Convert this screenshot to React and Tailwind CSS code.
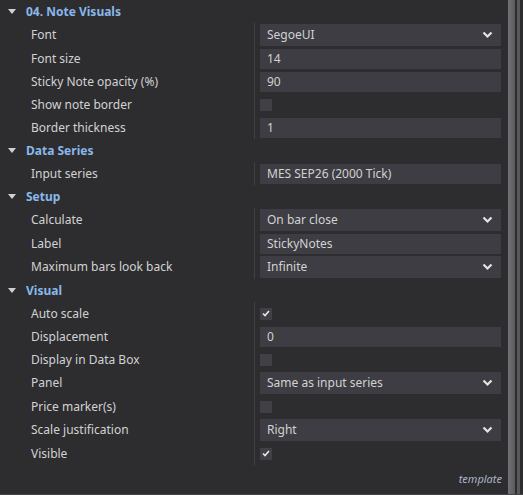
import React from "react";

const sections = [
  {
    title: "04. Note Visuals",
    rows: [
      { label: "Font", type: "select", value: "SegoeUI" },
      { label: "Font size", type: "text", value: "14" },
      { label: "Sticky Note opacity (%)", type: "text", value: "90" },
      { label: "Show note border", type: "check", value: false },
      { label: "Border thickness", type: "text", value: "1" },
    ],
  },
  {
    title: "Data Series",
    rows: [{ label: "Input series", type: "text", value: "MES SEP26 (2000 Tick)" }],
  },
  {
    title: "Setup",
    rows: [
      { label: "Calculate", type: "select", value: "On bar close" },
      { label: "Label", type: "text", value: "StickyNotes" },
      { label: "Maximum bars look back", type: "select", value: "Infinite" },
    ],
  },
  {
    title: "Visual",
    rows: [
      { label: "Auto scale", type: "check", value: true },
      { label: "Displacement", type: "text", value: "0" },
      { label: "Display in Data Box", type: "check", value: false },
      { label: "Panel", type: "select", value: "Same as input series" },
      { label: "Price marker(s)", type: "check", value: false },
      { label: "Scale justification", type: "select", value: "Right" },
      { label: "Visible", type: "check", value: true },
    ],
  },
];

const Chevron = () => (
  <svg width="11" height="8" viewBox="0 0 11 8" className="shrink-0">
    <polyline points="1.5,1.5 5.5,5.5 9.5,1.5" fill="none" stroke="#e4e4e4" strokeWidth="2.2" />
  </svg>
);

const Value = ({ row }) => {
  if (row.type === "check") {
    return (
      <div className="w-[12px] h-[12px] bg-[#404046] flex items-center justify-center">
        {row.value && (
          <svg width="8" height="7" viewBox="0 0 8 7">
            <polyline points="1,3.5 3,5.5 7,1" fill="none" stroke="#e8e8e8" strokeWidth="1.6" />
          </svg>
        )}
      </div>
    );
  }
  if (row.type === "select") {
    return (
      <div className="w-[241px] h-[22px] bg-[#3d3d43] flex items-center justify-between pl-[7px] pr-[8px]">
        <span>{row.value}</span>
        <Chevron />
      </div>
    );
  }
  return (
    <div className="w-[241px] h-[20px] bg-[#3d3d43] flex items-center pl-[7px]">
      <span>{row.value}</span>
    </div>
  );
};

const Row = ({ row }) => (
  <div className={`flex ${row.type === "select" ? "h-[24px]" : "h-[23px]"}`}>
    <div className="w-[254px] pl-[31px] flex items-center">{row.label}</div>
    <div className="flex-1 border-l border-[#3f3f44] pl-[5px] flex items-center">
      <Value row={row} />
    </div>
  </div>
);

export default function App() {
  return (
    <div
      className="w-[523px] h-[495px] bg-[#2d2d30] flex text-[12px] text-[#d2d2d2] overflow-hidden"
      style={{ fontFamily: '"Noto Sans", "Liberation Sans", sans-serif' }}
    >
      <div className="w-[507px] flex flex-col border-b border-[#434348]">
        {sections.map((s) => (
          <div key={s.title}>
            <div className="h-[23px] flex items-center pl-[8px] gap-[10px]">
              <svg width="8" height="5" viewBox="0 0 8 5">
                <polygon points="0,0 8,0 4,5" fill="#d0d0d0" />
              </svg>
              <span className="font-bold text-[#8ab8ea]">{s.title}</span>
            </div>
            {s.rows.map((r) => (
              <Row key={r.label} row={r} />
            ))}
          </div>
        ))}
        <div className="flex-1 flex items-center justify-end pr-[5px]">
          <span className="italic text-[11px] text-[#a9b3c6]">template</span>
        </div>
      </div>
      <div className="w-[16px] flex border-b border-[#434348]">
        <div className="w-[7px] ml-[1px] h-full bg-gradient-to-r from-[#727276] to-[#5a5a5e]" />
        <div className="w-[2px]" />
        <div className="w-[3px] bg-[#58585c]" />
      </div>
    </div>
  );
}
